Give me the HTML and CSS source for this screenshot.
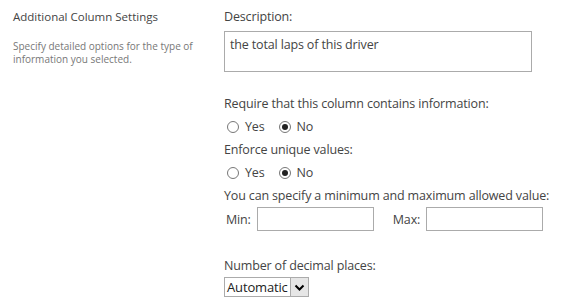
FILE: index.html
```html
<!DOCTYPE html>
<html>
  <head>
    <title>Additional Column Settings</title>
    <link rel="stylesheet" href="styles.css">
  </head>
  <body>
    <div class="section">
      <div class="section-info">
        <h3 class="section-title">Additional Column Settings</h3>
        <p class="section-desc">Specify detailed options for the type of information you selected.</p>
      </div>
      <div class="section-body">
        <div class="label label-first">Description:</div>
        <div class="textarea">the total laps of this driver</div>

        <div class="label label-require">Require that this column contains information:</div>
        <div class="radios">
          <label class="radio"><span class="dot"></span>Yes</label>
          <label class="radio"><span class="dot checked"></span>No</label>
        </div>

        <div class="label">Enforce unique values:</div>
        <div class="radios">
          <label class="radio"><span class="dot"></span>Yes</label>
          <label class="radio"><span class="dot checked"></span>No</label>
        </div>

        <div class="label">You can specify a minimum and maximum allowed value:</div>
        <div class="minmax">
          <span class="mm-label">Min:</span>
          <span class="box"></span>
          <span class="mm-label mm-max">Max:</span>
          <span class="box"></span>
        </div>

        <div class="label label-decimal">Number of decimal places:</div>
        <div class="select">
          <span class="select-text">Automatic</span>
          <span class="select-btn">
            <svg width="13" height="13" viewBox="0 0 13 13"><path d="M2.5 4.5 L6.5 8.5 L10.5 4.5" fill="none" stroke="#000" stroke-width="2"/></svg>
          </span>
        </div>
      </div>
    </div>
  </body>
</html>
```

FILE: styles.css
```css
body { margin: 0; background: #fff; font-family: "Open Sans", "Noto Sans", Arial, sans-serif; color: #444; }

.section { display: flex; padding-top: 8px; }
.section-info { width: 197px; padding-left: 13px; flex-shrink: 0; }
.section-title { margin: 0; font-size: 11.5px; font-weight: normal; color: #444; line-height: 17px; }
.section-desc { margin: 15px 0 0 0; font-size: 10px; line-height: 13px; color: #777; width: 190px; }

.section-body { padding-left: 14px; font-size: 12.5px; letter-spacing: -0.15px; }
.label { line-height: 23px; }
.label-first { line-height: 17px; }
.textarea { width: 296px; height: 33px; border: 1px solid #ababab; padding: 4px 5px 2px 5px; margin-top: 6px; color: #444; }
.label-require { margin-top: 20px; }

.radios { display: flex; height: 23px; align-items: center; }
.radio { display: flex; align-items: center; margin-right: 11px; margin-left: 3px; }
.dot { width: 12px; height: 12px; border: 1px solid #777; border-radius: 50%; box-sizing: border-box; margin-right: 6px; display: flex; align-items: center; justify-content: center; }
.dot.checked::after { content: ""; width: 6px; height: 6px; border-radius: 50%; background: #222; }

.minmax { display: flex; align-items: center; height: 24px; }
.mm-label { margin-left: 2px; margin-right: 6px; }
.mm-max { margin-left: 19px; }
.box { width: 117px; height: 24px; border: 1px solid #ababab; box-sizing: border-box; }

.label-decimal { margin-top: 23px; }
.select { display: inline-flex; border: 1px solid #ababab; height: 20px; box-sizing: border-box; }
.select-text { padding: 0 2px 0 2px; line-height: 18px; color: #222; font-size: 13px; }
.select-btn { width: 17px; border-left: 1px solid #ababab; background: #e6e6e6; display: flex; align-items: center; justify-content: center; }
```
